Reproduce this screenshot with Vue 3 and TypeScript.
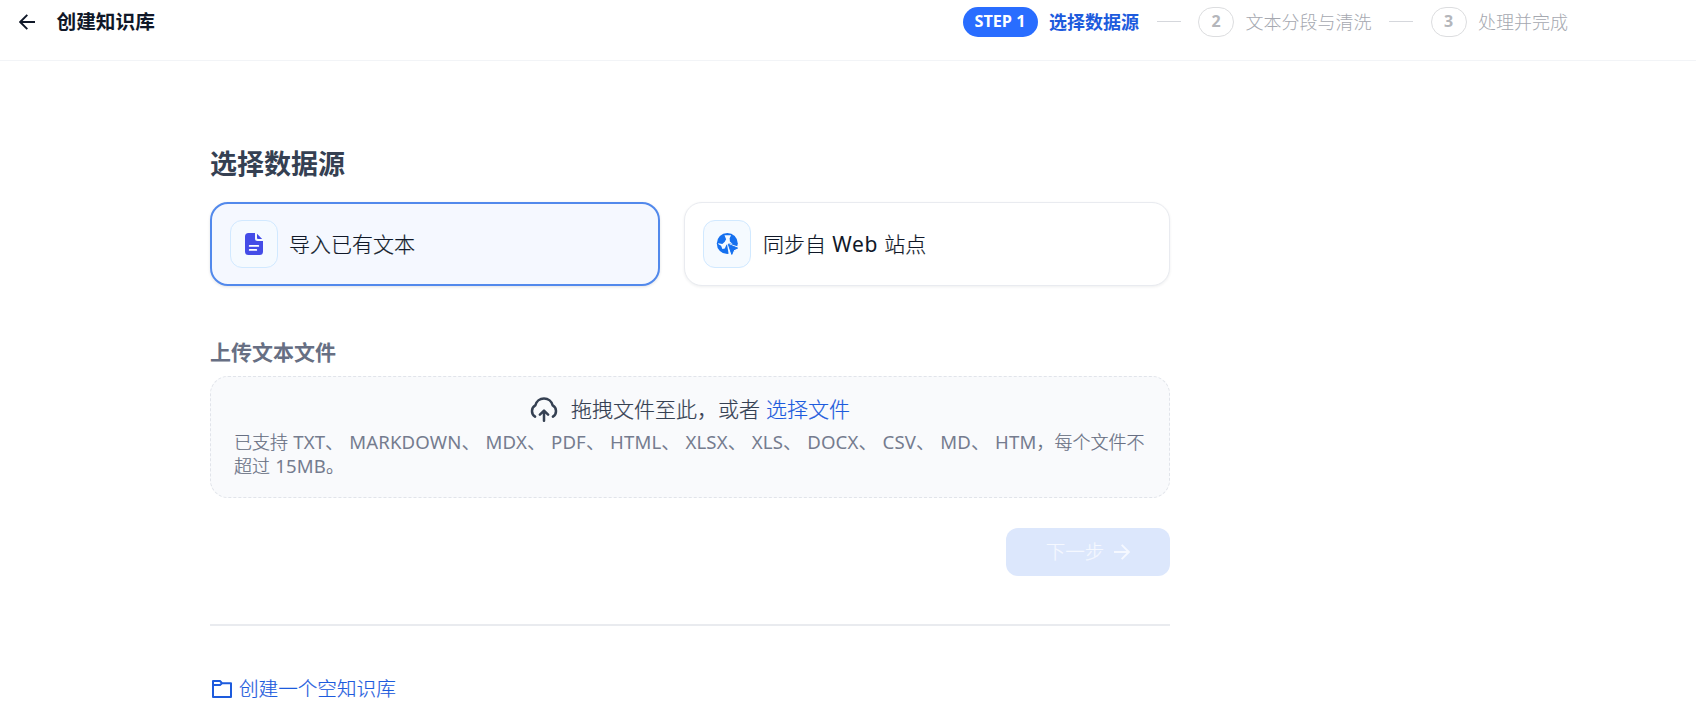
<script setup lang="ts">
interface Step {
  index: number
  label: string
}

const upcoming: Step[] = [
  { index: 2, label: '文本分段与清洗' },
  { index: 3, label: '处理并完成' },
]
const formats: string[] = ['TXT', 'MARKDOWN', 'MDX', 'PDF', 'HTML', 'XLSX', 'XLS', 'DOCX', 'CSV', 'MD', 'HTM']
const formatText = formats.join('、 ')
</script>

<template>
  <div class="page">
    <header class="header">
      <svg class="back" viewBox="0 0 16 16" fill="none" stroke="currentColor" stroke-width="1.9">
        <path d="M16 8H1.4M8.3 .8 1.2 8l7.1 7.2" />
      </svg>
      <h1 class="name">创建知识库</h1>
      <nav class="steps">
        <span class="pill">STEP 1</span>
        <span class="label current">选择数据源</span>
        <template v-for="step in upcoming" :key="step.index">
          <span class="dash"></span>
          <span class="circle">{{ step.index }}</span>
          <span class="label">{{ step.label }}</span>
        </template>
      </nav>
    </header>

    <main class="main">
      <h2 class="title">选择数据源</h2>
      <div class="cards">
        <div class="card active">
          <span class="tile">
            <svg class="doc" viewBox="0 0 18 22">
              <path d="M3.5 0H10v5.5A2.5 2.5 0 0 0 12.500 8H18v10.500A3.500 3.500 0 0 1 14.500 22h-11A3.500 3.500 0 0 1 0 18.500v-15A3.500 3.500 0 0 1 3.500 0Z" fill="#444ce7" />
              <path d="M12 .8 17.200 6H13a1 1 0 0 1-1-1Z" fill="#444ce7" />
              <path d="M4.700 12.900h8.600M4.700 16.900h6.600" stroke="#fff" stroke-width="1.800" stroke-linecap="round" />
            </svg>
          </span>
          <span class="card-text">导入已有文本</span>
        </div>
        <div class="card web">
          <span class="tile">
            <svg class="globe" viewBox="-.8 0 22 22">
              <circle cx="10.500" cy="10.500" r="10.500" fill="#1570ef" />
              <path d="M7.700 2.300h6.600l-1.500 3 .3 3.300 2.700 2.500-4.400-.8-1.900 1.700-1.500 3.600-2.400.3-1.300-3.100-3-1.800.2-.8 4 .7 2.500-2.200 1.300-2.500Z" fill="#f5faff" />
              <path d="m10 9.800 12.500 4.200v2.500L18 18l-2 4h-4Z" fill="#f5faff" />
              <path d="m11.500 11.300 9.300 3.800-3.900 1.800-1.900 4.500Z" fill="#1570ef" stroke="#1570ef" stroke-linejoin="round" />
            </svg>
          </span>
          <span class="card-text">同步自 <span class="latin">Web</span> 站点</span>
        </div>
      </div>

      <h3 class="subtitle">上传文本文件</h3>
      <div class="dropzone">
        <div class="drop-line">
          <svg class="cloud" viewBox="0 0 28 26" fill="none" stroke="currentColor" stroke-width="2.500" stroke-linecap="round" stroke-linejoin="round">
            <path d="M5.100 20.600A6.500 6.500 0 0 1 5.300 9.400a8.900 8.900 0 0 1 17.400 0 6.500 6.500 0 0 1 .2 11.200" />
            <path d="M14 24.800V15M9.900 18.600 14 14.600l4.100 4" />
          </svg>
          <span class="drop-text">拖拽文件至此，或者</span>
          <a class="pick">选择文件</a>
        </div>
        <p class="hint">已支持 <span class="formats">{{ formatText }}</span>，每个文件不<br>超过 <span class="formats">15MB</span>。</p>
      </div>

      <div class="actions">
        <button class="next" disabled>
          <span>下一步</span>
          <svg class="forward" viewBox="0 0 16 16" fill="none" stroke="currentColor" stroke-width="1.900">
            <path d="M0 8h14.600M7.700 .8 14.800 8l-7.100 7.200" />
          </svg>
        </button>
      </div>

      <div class="divider"></div>

      <a class="empty">
        <svg class="folder" viewBox="0 0 20 18" fill="none" stroke="currentColor" stroke-width="2">
          <path d="M1 17V1h7l2 2.200h9V17ZM1 5h7l2-1.800" stroke-linejoin="round" />
        </svg>
        <span>创建一个空知识库</span>
      </a>
    </main>
  </div>
</template>

<style>
body {
  margin: 0;
  overflow: hidden;
  background: #fff;
}
</style>

<style scoped>
.page {
  height: 723px;
  overflow: hidden;
  font-family: "Noto Sans", "Noto Sans CJK SC", sans-serif;
  color: #101828;
  white-space: nowrap;
}
h1, h2, h3, p {
  margin: 0;
}
.header {
  box-sizing: border-box;
  height: 61px;
  padding: 0 128px 17px 19px;
  border-bottom: 1px solid #f2f4f7;
  display: flex;
  align-items: center;
}
.back {
  width: 16px;
  height: 16px;
}
.name {
  margin-left: 21.5px;
  font-size: 19.7px;
  line-height: 28px;
  font-weight: 700;
}
.steps {
  margin-left: auto;
  display: flex;
  align-items: center;
}
.pill {
  box-sizing: border-box;
  width: 75px;
  height: 30px;
  margin-top: 1px;
  border-radius: 15px;
  background: #296dff;
  color: #fff;
  font: 700 16.2px/28px "Open Sans", sans-serif;
  text-align: center;
}
.label {
  margin-left: 11.5px;
  font-size: 18px;
  line-height: 28px;
  font-weight: 300;
  color: #a5a8b0;
}
.current {
  color: #1d5bdd;
  font-weight: 700;
}
.dash {
  width: 24px;
  height: 1px;
  margin: 0 17.500px;
  background: #d5d7dc;
}
.circle {
  box-sizing: border-box;
  width: 36px;
  height: 30px;
  margin-top: 1px;
  border: 1px solid #dcdddf;
  border-radius: 15px;
  color: #b4b6bb;
  font: 700 16px/27px "Open Sans", sans-serif;
  text-align: center;
}
.main {
  width: 960px;
  margin-left: 210px;
  padding-top: 85px;
}
.title {
  font-size: 27px;
  line-height: 36px;
  color: #354052;
}
.cards {
  display: flex;
  gap: 24px;
  margin-top: 20px;
}
.card {
  box-sizing: border-box;
  width: 450px;
  height: 84px;
  padding: 0 18px;
  border: 2px solid #5289ec;
  border-radius: 18px;
  display: flex;
  align-items: center;
  gap: 11px;
  background: #f5f8ff;
  box-shadow: 0 1px 3px rgba(16, 24, 40, .12);
}
.web {
  width: 486px;
  border: 1px solid #e9ebf0;
  background: #fff;
  box-shadow: 0 1px 3px rgba(16, 24, 40, .07);
  gap: 12px;
}
.tile {
  box-sizing: border-box;
  width: 48px;
  height: 48px;
  border: 1px solid #d1e9ff;
  border-radius: 12px;
  background: #f5faff;
  display: flex;
  align-items: center;
  justify-content: center;
}
.doc {
  width: 18px;
  height: 22px;
}
.globe {
  width: 22px;
  height: 22px;
}
.card-text {
  font-size: 21px;
  line-height: 30px;
  font-weight: 300;
  word-spacing: 0.8px;
  -webkit-text-stroke: 0.2px currentColor;
}
.latin {
  font-weight: 400;
  letter-spacing: 0.6px;
  -webkit-text-stroke: 0;
}
.subtitle {
  margin-top: 51px;
  font-size: 21px;
  line-height: 30px;
  color: #676f83;
}
.dropzone {
  box-sizing: border-box;
  height: 122px;
  margin-top: 9px;
  padding: 17px 23px;
  border: 1px dashed #e1e4ea;
  border-radius: 18px;
  background: #f9fafc;
}
.drop-line {
  height: 30px;
  margin-bottom: 6px;
  display: flex;
  align-items: center;
  justify-content: center;
  color: #354052;
  font-size: 21px;
  line-height: 30px;
  font-weight: 300;
  -webkit-text-stroke: 0.2px currentColor;
}
.cloud {
  width: 28px;
  height: 26px;
  margin-right: 13px;
}
.pick {
  margin-left: 6px;
  color: #1d5bdd;
}
.hint {
  height: 48px;
  font-size: 18px;
  line-height: 24px;
  font-weight: 300;
  color: #676f83;
  word-spacing: 0.5px;
  -webkit-text-stroke: 0.2px currentColor;
}
.formats {
  font-size: 18.6px;
  line-height: 1;
  font-weight: 400;
  letter-spacing: 0.12px;
  color: #757c8f;
  -webkit-text-stroke: 0;
}
.actions {
  display: flex;
  justify-content: flex-end;
  margin-top: 30px;
}
.next {
  width: 164px;
  height: 48px;
  padding: 0;
  border: 0;
  border-radius: 12px;
  background: #dce7fc;
  color: #f5f8ff;
  font: 300 19.5px/28px "Noto Sans", "Noto Sans CJK SC", sans-serif;
  -webkit-text-stroke: 0.2px currentColor;
  display: flex;
  align-items: center;
  justify-content: center;
  gap: 10px;
}
.forward {
  width: 16px;
  height: 16px;
}
.divider {
  height: 2px;
  margin-top: 48px;
  background: #e9ebef;
}
.empty {
  display: flex;
  align-items: center;
  gap: 7px;
  margin: 49px 0 0 2px;
  color: #1d5bdd;
  font-size: 19.6px;
  line-height: 28px;
  font-weight: 300;
  -webkit-text-stroke: 0.2px currentColor;
}
.folder {
  width: 20px;
  height: 18px;
}
</style>
